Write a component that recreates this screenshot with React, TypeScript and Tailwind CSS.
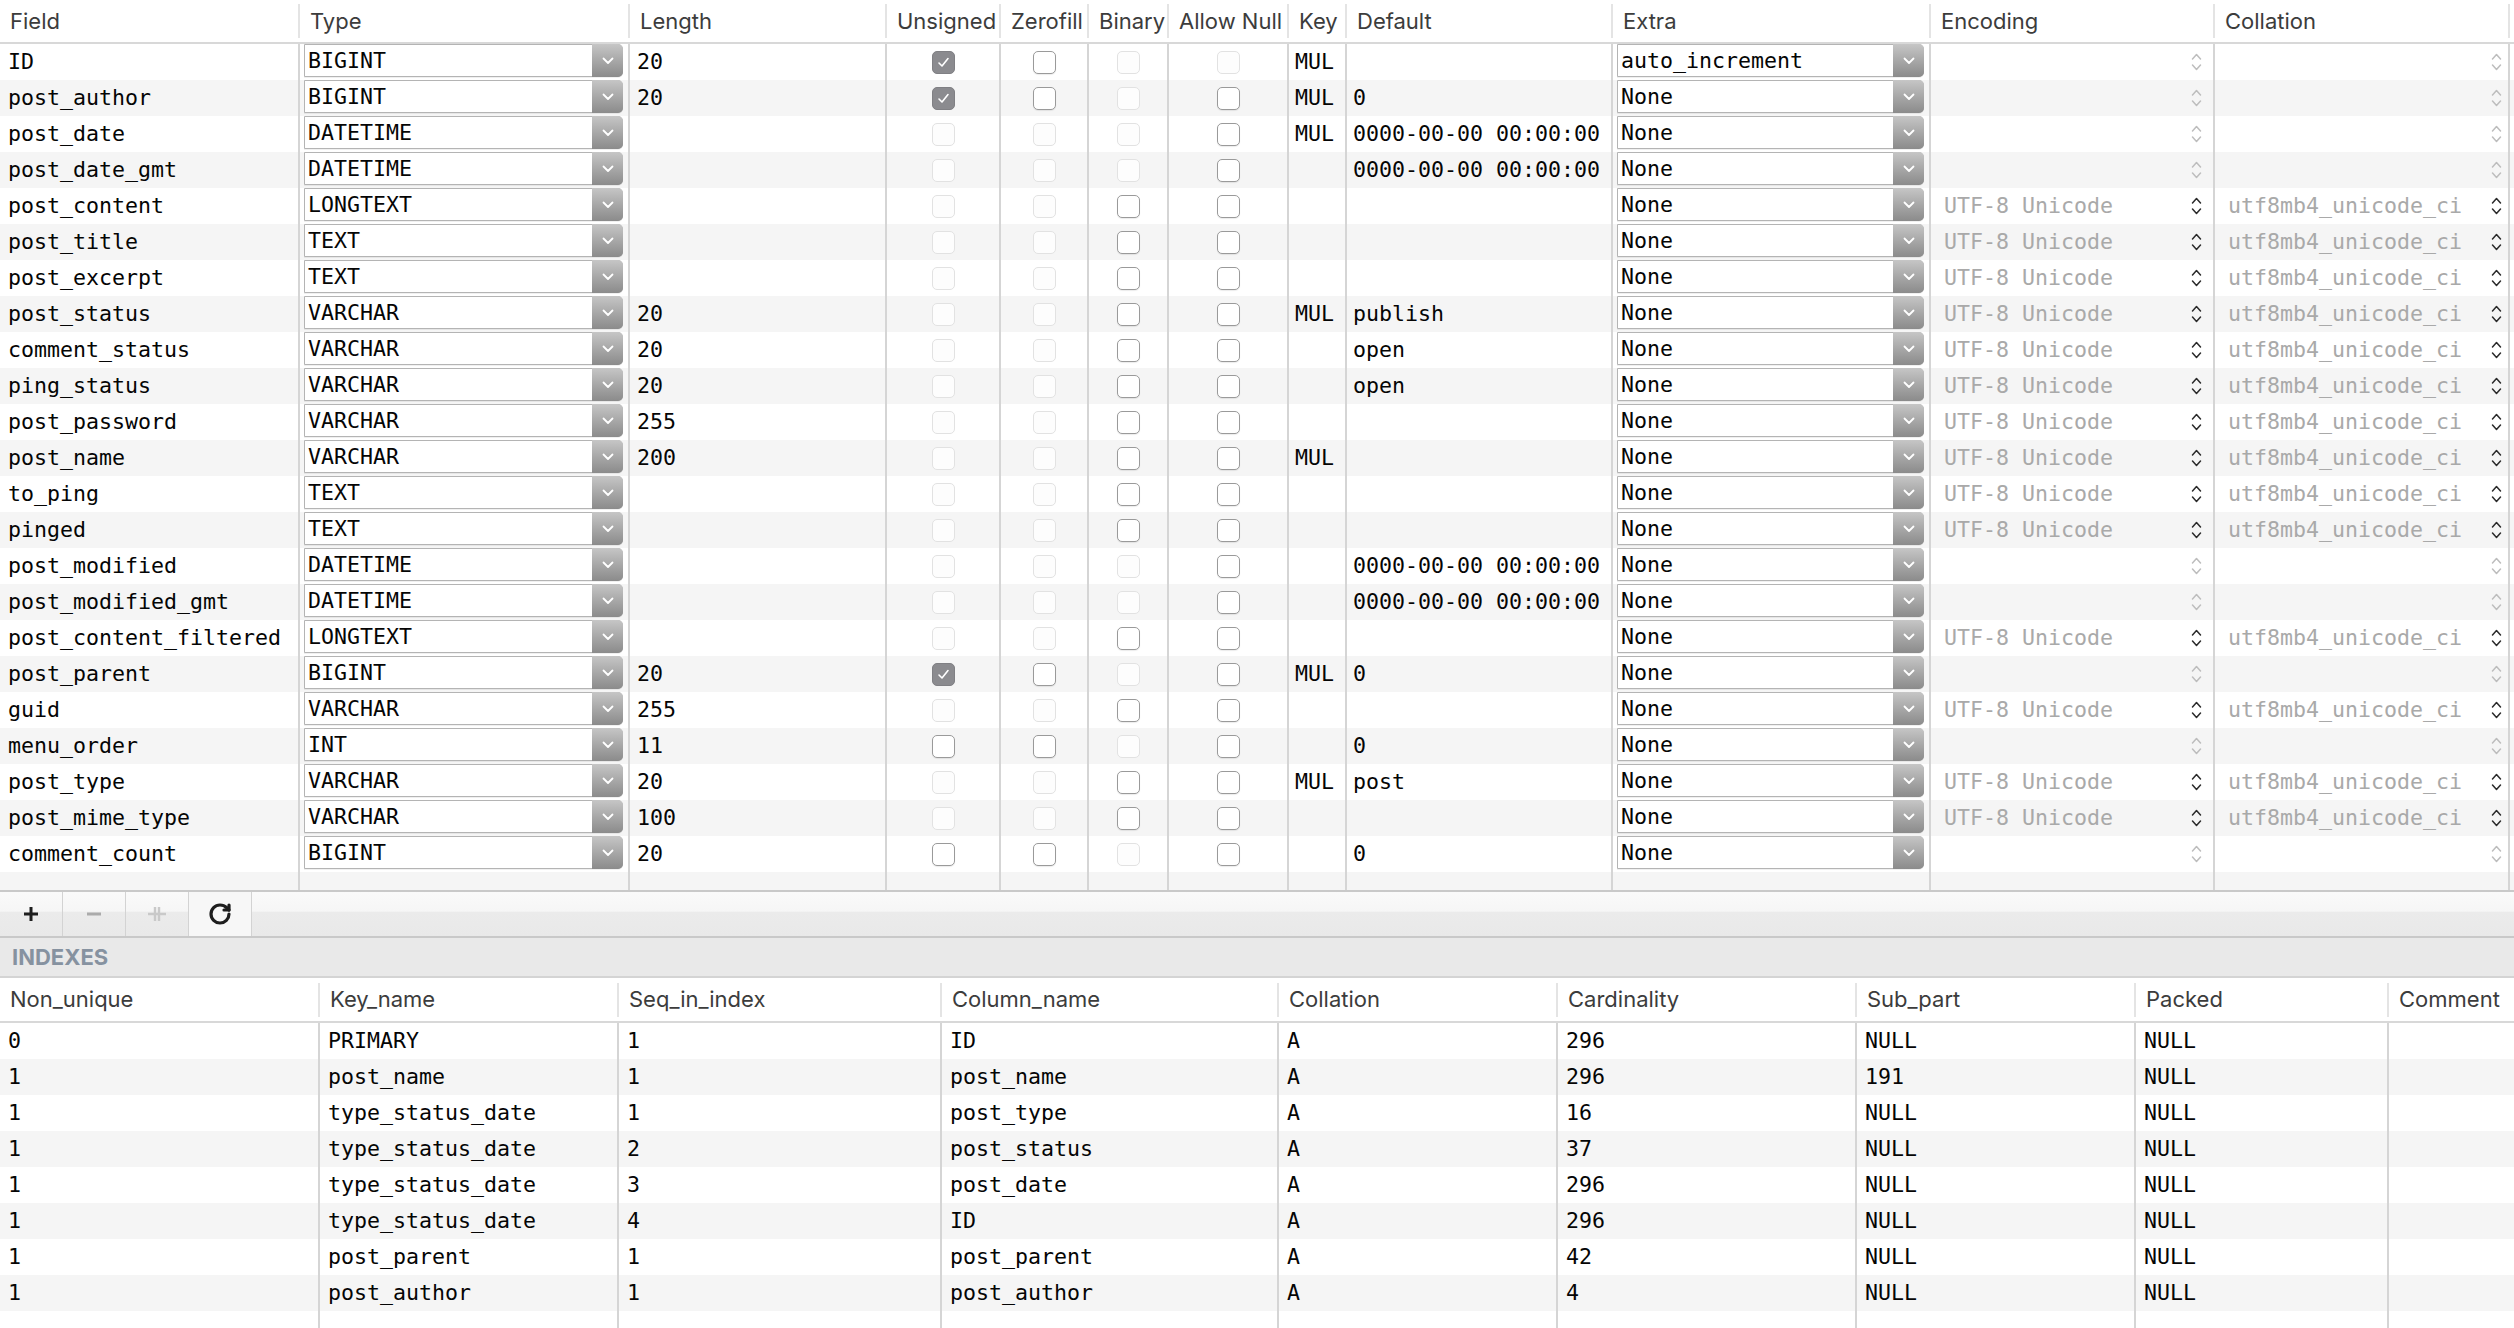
import React from 'react';
import { RotateCw } from 'lucide-react';

type CB = 'c' | 'e' | 'd';
type Row = {
  name: string;
  type: string;
  len: string;
  u: CB;
  z: CB;
  b: CB;
  n: CB;
  key: string;
  def: string;
  extra: string;
  enc: boolean;
};

const big = (name: string, n: CB, key: string, def: string, extra = 'None'): Row => ({
  name, type: 'BIGINT', len: '20', u: 'c', z: 'e', b: 'd', n, key, def, extra, enc: false,
});
const dt = (name: string, key: string): Row => ({
  name, type: 'DATETIME', len: '', u: 'd', z: 'd', b: 'd', n: 'e', key, def: '0000-00-00 00:00:00', extra: 'None', enc: false,
});
const tx = (name: string, type: string, len: string, key: string, def: string): Row => ({
  name, type, len, u: 'd', z: 'd', b: 'e', n: 'e', key, def, extra: 'None', enc: true,
});

const rows: Row[] = [
  big('ID', 'd', 'MUL', '', 'auto_increment'),
  big('post_author', 'e', 'MUL', '0'),
  dt('post_date', 'MUL'),
  dt('post_date_gmt', ''),
  tx('post_content', 'LONGTEXT', '', '', ''),
  tx('post_title', 'TEXT', '', '', ''),
  tx('post_excerpt', 'TEXT', '', '', ''),
  tx('post_status', 'VARCHAR', '20', 'MUL', 'publish'),
  tx('comment_status', 'VARCHAR', '20', '', 'open'),
  tx('ping_status', 'VARCHAR', '20', '', 'open'),
  tx('post_password', 'VARCHAR', '255', '', ''),
  tx('post_name', 'VARCHAR', '200', 'MUL', ''),
  tx('to_ping', 'TEXT', '', '', ''),
  tx('pinged', 'TEXT', '', '', ''),
  dt('post_modified', ''),
  dt('post_modified_gmt', ''),
  tx('post_content_filtered', 'LONGTEXT', '', '', ''),
  big('post_parent', 'e', 'MUL', '0'),
  tx('guid', 'VARCHAR', '255', '', ''),
  { name: 'menu_order', type: 'INT', len: '11', u: 'e', z: 'e', b: 'd', n: 'e', key: '', def: '0', extra: 'None', enc: false },
  tx('post_type', 'VARCHAR', '20', 'MUL', 'post'),
  tx('post_mime_type', 'VARCHAR', '100', '', ''),
  { name: 'comment_count', type: 'BIGINT', len: '20', u: 'e', z: 'e', b: 'd', n: 'e', key: '', def: '0', extra: 'None', enc: false },
];

const indexes: string[][] = [
  ['0', 'PRIMARY', '1', 'ID', 'A', '296', 'NULL', 'NULL', ''],
  ['1', 'post_name', '1', 'post_name', 'A', '296', '191', 'NULL', ''],
  ['1', 'type_status_date', '1', 'post_type', 'A', '16', 'NULL', 'NULL', ''],
  ['1', 'type_status_date', '2', 'post_status', 'A', '37', 'NULL', 'NULL', ''],
  ['1', 'type_status_date', '3', 'post_date', 'A', '296', 'NULL', 'NULL', ''],
  ['1', 'type_status_date', '4', 'ID', 'A', '296', 'NULL', 'NULL', ''],
  ['1', 'post_parent', '1', 'post_parent', 'A', '42', 'NULL', 'NULL', ''],
  ['1', 'post_author', '1', 'post_author', 'A', '4', 'NULL', 'NULL', ''],
];

const TOP_GRID =
  'grid grid-cols-[300px_330px_257px_114px_88px_80px_120px_58px_266px_318px_284px_295px_1fr]';
const IDX_GRID = 'grid grid-cols-[320px_299px_323px_337px_279px_299px_279px_253px_1fr]';

const MONO = "font-['DejaVu_Sans_Mono',monospace] text-[21.6px] leading-none text-[#050505] whitespace-nowrap";
const SANS = "font-['Inter',sans-serif]";
const LINE = 'border-r-2 border-[#d5d5d5]';

function Chevron() {
  return (
    <svg width="12" height="8" viewBox="0 0 12 8">
      <path d="M1.5 1.5 L6 6 L10.5 1.5" fill="none" stroke="#ffffff" strokeWidth="1.8" strokeLinecap="round" strokeLinejoin="round" />
    </svg>
  );
}

function Select({ value }: { value: string }) {
  return (
    <div className="mt-0 ml-[4px] mr-[5px] h-[33px] flex border border-[#b4b4b4] bg-white rounded-r-[5px] shadow-[0_1px_0_rgba(0,0,0,0.06)]">
      <div className={`flex-1 pl-[3px] pt-[1px] flex items-center ${MONO}`}>{value}</div>
      <div className="w-[31px] my-[-1px] mr-[-1px] rounded-r-[5px] bg-linear-to-b from-[#c6c6c6] to-[#8b8b8b] flex items-center justify-center">
        <Chevron />
      </div>
    </div>
  );
}

function Check({ s }: { s: CB }) {
  if (s === 'c')
    return (
      <div className="w-[23px] h-[23px] rounded-[5px] bg-[#8b8b8f] border border-[#808084] flex items-center justify-center">
        <svg width="13" height="11" viewBox="0 0 13 11">
          <path d="M2 6 L5 9 L11 1.5" fill="none" stroke="#ffffff" strokeWidth="1.6" strokeLinecap="round" strokeLinejoin="round" />
        </svg>
      </div>
    );
  if (s === 'e')
    return <div className="w-[23px] h-[23px] rounded-[5px] border border-[#9a9a9a] bg-white shadow-[0_1px_1px_rgba(0,0,0,0.08)]" />;
  return <div className="w-[23px] h-[23px] rounded-[5px] border border-[#e2e2e2] bg-[#fdfdfd]" />;
}

function Stepper({ dark }: { dark: boolean }) {
  const c = dark ? '#2a2a2a' : '#bdbdbd';
  return (
    <svg width="11" height="20" viewBox="0 0 11 20">
      <path d="M1.5 7 L5.5 2.5 L9.5 7" fill="none" stroke={c} strokeWidth="1.5" strokeLinecap="round" strokeLinejoin="round" />
      <path d="M1.5 13 L5.5 17.5 L9.5 13" fill="none" stroke={c} strokeWidth="1.5" strokeLinecap="round" strokeLinejoin="round" />
    </svg>
  );
}

function HeadCell({ label, last }: { label: string; last?: boolean }) {
  return (
    <div className="flex items-center justify-between h-full">
      <span className={`${SANS} pl-[10px] text-[22px] text-[#3c3c3c] whitespace-nowrap`}>{label}</span>
      {!last && <div className="w-[2px] h-[34px] bg-[#e4e4e4]" />}
    </div>
  );
}

const topHeads = ['Field', 'Type', 'Length', 'Unsigned', 'Zerofill', 'Binary', 'Allow Null', 'Key', 'Default', 'Extra', 'Encoding', 'Collation'];
const idxHeads = ['Non_unique', 'Key_name', 'Seq_in_index', 'Column_name', 'Collation', 'Cardinality', 'Sub_part', 'Packed', 'Comment'];

function TopRow({ r, i }: { r: Row; i: number }) {
  const bg = i % 2 === 0 ? 'bg-white' : 'bg-[#f5f5f5]';
  return (
    <div className={`${TOP_GRID} h-[36px] ${bg}`}>
      <div className={`${LINE} flex items-center pl-[8px] ${MONO}`}>{r.name}</div>
      <div className={`${LINE} flex items-start`}>
        <div className="flex-1">
          <Select value={r.type} />
        </div>
      </div>
      <div className={`${LINE} flex items-center pl-[7px] ${MONO}`}>{r.len}</div>
      <div className={`${LINE} flex items-center justify-center`}>
        <Check s={r.u} />
      </div>
      <div className={`${LINE} flex items-center justify-center`}>
        <Check s={r.z} />
      </div>
      <div className={`${LINE} flex items-center justify-center`}>
        <Check s={r.b} />
      </div>
      <div className={`${LINE} flex items-center justify-center`}>
        <Check s={r.n} />
      </div>
      <div className={`${LINE} flex items-center pl-[6px] ${MONO}`}>{r.key}</div>
      <div className={`${LINE} flex items-center pl-[6px] ${MONO}`}>{r.def}</div>
      <div className={`${LINE} flex items-start`}>
        <div className="flex-1">
          <Select value={r.extra} />
        </div>
      </div>
      <div className={`${LINE} flex items-center justify-between pl-[13px] pr-[11px]`}>
        <span className={`${MONO} text-[#a9a9a9]`}>{r.enc ? 'UTF-8 Unicode' : ''}</span>
        <Stepper dark={r.enc} />
      </div>
      <div className={`${LINE} flex items-center justify-between pl-[13px] pr-[6px]`}>
        <span className={`${MONO} text-[#a9a9a9]`}>{r.enc ? 'utf8mb4_unicode_ci' : ''}</span>
        <Stepper dark={r.enc} />
      </div>
      <div />
    </div>
  );
}

function TopFiller() {
  return (
    <div className={`${TOP_GRID} h-[18px] bg-[#f5f5f5]`}>
      {Array.from({ length: 12 }).map((_, k) => (
        <div key={k} className={LINE} />
      ))}
      <div />
    </div>
  );
}

function IdxRow({ cells, i }: { cells: string[]; i: number }) {
  const bg = i % 2 === 0 ? 'bg-white' : 'bg-[#f5f5f5]';
  return (
    <div className={`${IDX_GRID} h-[36px] ${bg}`}>
      {cells.map((c, k) => (
        <div key={k} className={`${k < 8 ? LINE : ''} flex items-center pl-[8px] ${MONO}`}>
          {c}
        </div>
      ))}
    </div>
  );
}

function ToolButton({ children, light }: { children: React.ReactNode; light?: boolean }) {
  return (
    <div
      className={`w-[63px] h-full flex items-center justify-center border-r border-[#d3d3d3] ${
        light ? 'bg-[#f7f7f7]' : ''
      }`}
    >
      {children}
    </div>
  );
}

export default function App() {
  return (
    <div className="w-[2514px] h-[1328px] overflow-hidden bg-white flex flex-col">
      {/* Fields header */}
      <div className={`${TOP_GRID} h-[44px] border-b-2 border-[#d8d8d8] bg-white`}>
        {topHeads.map((h) => (
          <HeadCell key={h} label={h} />
        ))}
        <div />
      </div>

      {/* Field rows */}
      <div className="flex flex-col">
        {rows.map((r, i) => (
          <TopRow key={r.name} r={r} i={i} />
        ))}
        <TopFiller />
      </div>

      {/* Toolbar */}
      <div className="h-[48px] border-t-2 border-b-2 border-[#c9c9c9] flex bg-[linear-gradient(to_bottom,#fafafa_0%,#f6f6f6_44%,#ebebeb_45%,#e9e9e9_100%)]">
        <ToolButton>
          <svg width="18" height="18" viewBox="0 0 18 18">
            <path d="M9 2 V16 M2 9 H16" stroke="#1e1e1e" strokeWidth="3" strokeLinecap="butt" />
          </svg>
        </ToolButton>
        <ToolButton>
          <svg width="18" height="18" viewBox="0 0 18 18">
            <path d="M2 9 H16" stroke="#ababab" strokeWidth="3" />
          </svg>
        </ToolButton>
        <ToolButton>
          <svg width="22" height="20" viewBox="0 0 22 20">
            <path d="M2 10 H20 M9 3 V17 M13 3 V17" stroke="#c9c9c9" strokeWidth="2.4" />
          </svg>
        </ToolButton>
        <ToolButton light>
          <RotateCw size={24} strokeWidth={3.2} color="#1e1e1e" />
        </ToolButton>
      </div>

      {/* INDEXES bar */}
      <div className={`h-[40px] bg-[#e9e9e9] border-b-2 border-[#d4d4d4] flex items-center pl-[12px] ${SANS} font-bold text-[22px] text-[#8692a0]`}>
        INDEXES
      </div>

      {/* Index header */}
      <div className={`${IDX_GRID} h-[45px] border-b-2 border-[#d8d8d8] bg-white`}>
        {idxHeads.map((h, k) => (
          <HeadCell key={h} label={h} last={k === idxHeads.length - 1} />
        ))}
      </div>

      {/* Index rows */}
      <div className="flex-1 flex flex-col">
        {indexes.map((c, i) => (
          <IdxRow key={i} cells={c} i={i} />
        ))}
        <div className={`${IDX_GRID} flex-1 bg-white`}>
          {Array.from({ length: 8 }).map((_, k) => (
            <div key={k} className={LINE} />
          ))}
          <div />
        </div>
      </div>
    </div>
  );
}
